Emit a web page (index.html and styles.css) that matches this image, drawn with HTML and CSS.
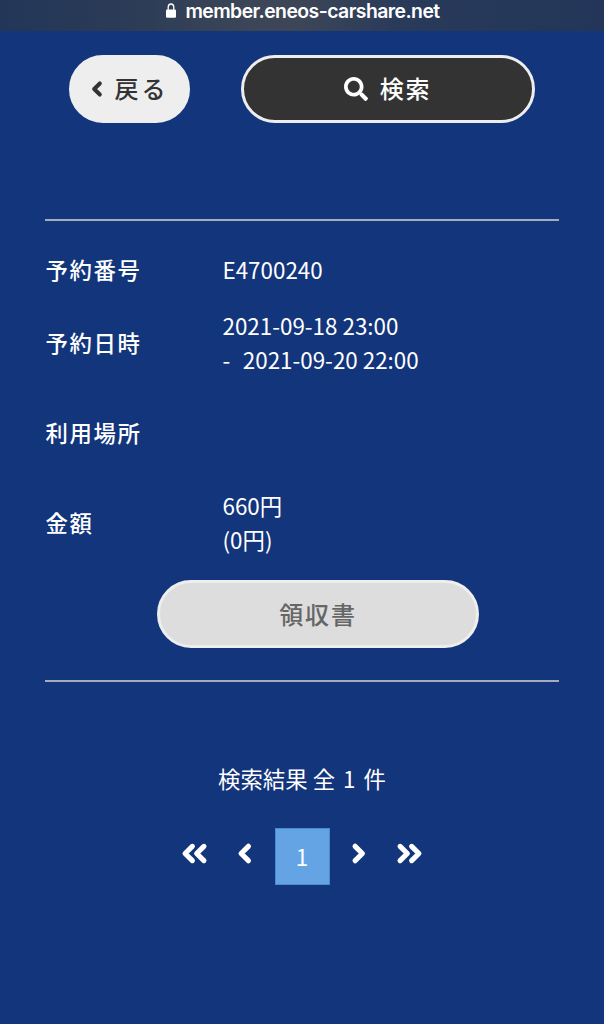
FILE: index.html
```html
<!DOCTYPE html>
<html lang="ja">
<head>
<meta charset="utf-8">
<title>member.eneos-carshare.net</title>
<link rel="stylesheet" href="styles.css">
</head>
<body>
<header class="browser-bar">
  <svg class="lock" viewBox="0 0 10 15"><path d="M2.2 7V4.2a2.8 3.2 0 0 1 5.6 0V7" fill="none" stroke="currentColor" stroke-width="1.3"/><rect x="0" y="6.4" width="10" height="8.4" rx="1.2" fill="currentColor"/></svg>
  <span class="url">member.eneos-carshare.net</span>
</header>
<main>
  <div class="actions">
    <button class="button button-back"><svg class="icon-back chevron" viewBox="0 0 256 512"><path d="M188 138L68 256l120 118"/></svg><span class="back-label">戻る</span></button>
    <button class="button button-search"><svg class="icon-search" viewBox="0 0 512 512"><path fill="currentColor" d="M505 442.7L405.3 343c-4.5-4.5-10.6-7-17-7H372c27.6-35.3 44-79.7 44-128C416 93.1 322.9 0 208 0S0 93.1 0 208s93.1 208 208 208c48.3 0 92.7-16.4 128-44v16.3c0 6.4 2.5 12.5 7 17l99.7 99.7c9.4 9.4 24.6 9.4 33.9 0l28.3-28.3c9.4-9.4 9.4-24.6.1-34zM208 336c-70.7 0-128-57.2-128-128 0-70.7 57.2-128 128-128 70.7 0 128 57.2 128 128 0 70.7-57.2 128-128 128z"/></svg><span>検索</span></button>
  </div>
  <section class="reservation">
    <dl class="details">
      <dt>予約番号</dt><dd>E4700240</dd>
      <dt>予約日時</dt><dd>2021-09-18 23:00<br>-<span class="end-date">2021-09-20 22:00</span></dd>
      <dt>利用場所</dt><dd></dd>
      <dt>金額</dt><dd>660円<br>(0円)</dd>
    </dl>
    <button class="button button-receipt" disabled>領収書</button>
  </section>
  <p class="result-count">検索結果 全<span class="count">1</span>件</p>
  <nav class="pagination">
    <svg class="double chevron" viewBox="0 0 448 512"><path d="M188 138L68 256l120 118M380 138L260 256l120 118"/></svg>
    <svg class="single previous chevron" viewBox="0 0 256 512"><path d="M188 138L68 256l120 118"/></svg>
    <span class="current">1</span>
    <svg class="single next chevron" viewBox="0 0 256 512"><path d="M68 138l120 118L68 374"/></svg>
    <svg class="double chevron" viewBox="0 0 448 512"><path d="M68 138l120 118L68 374M260 138l120 118-120 118"/></svg>
  </nav>
</main>
</body>
</html>
```
FILE: styles.css
```css
* { box-sizing: border-box; }
body {
  margin: 0;
  min-height: 1024px;
  background: #13357b;
  color: #fff;
  font: 22.4px/34px "Noto Sans CJK JP", sans-serif;
}
svg { display: block; flex: none; }
.chevron {
  fill: none;
  stroke: currentColor;
  stroke-width: 86px;
  stroke-linecap: round;
  stroke-linejoin: round;
}
.browser-bar {
  height: 31px;
  display: flex;
  justify-content: center;
  align-items: flex-start;
  gap: 9px;
  padding: 0 0 0 2px;
  background: linear-gradient(90deg, #233659 0%, #2c3c57 22%, #3c4657 42%, #3c4657 50%, #293a5a 66%, #233659 100%);
}
.lock { width: 10px; height: 15px; margin-top: 3px; }
.url { font: 600 19.4px/22px Inter, sans-serif; letter-spacing: -0.55px; }
.actions {
  display: flex;
  gap: 51px;
  padding: 23.5px 0 0 69px;
}
.button {
  display: flex;
  align-items: center;
  justify-content: center;
  height: 68px;
  padding: 0 0 1px;
  border: 3.5px solid #eee;
  border-radius: 34px;
  font: 500 24px/34px "Noto Sans CJK JP", sans-serif;
  letter-spacing: 1.8px;
}
.button-back { width: 121px; background: #eee; color: #333; gap: 12px; }
.back-label { letter-spacing: 3px; }
.icon-back { width: 12px; height: 24px; margin-top: 1px; }
.button-search { width: 294px; background: #333; color: #fff; gap: 12px; padding-right: 1px; }
.icon-search { width: 24px; height: 24px; margin-top: 1px; }
.reservation {
  margin: 96.5px 45px 0;
  height: 463px;
  border-top: 2px solid #a5acbd;
  border-bottom: 2px solid #a5acbd;
  padding-top: 19.5px;
}
.details {
  display: grid;
  grid-template-columns: 177px 1fr;
  grid-template-rows: 56px 90px 90.5px 90.5px;
  align-items: center;
  margin: 0;
  padding-left: 0.5px;
}
.details dt { font-weight: 500; letter-spacing: 1.6px; }
.details dd { margin: 0; }
.end-date { margin-left: 12.5px; }
.button-receipt {
  width: 322px;
  margin: 12.5px 0 0 112px;
  background: #ddd;
  color: #666;
}
.result-count { margin: 79px 0 0; text-align: center; }
.count { margin: 0 8px; }
.pagination {
  display: flex;
  justify-content: center;
  align-items: center;
  margin-top: 32.5px;
}
.double { width: 27px; height: 31px; margin-bottom: 5px; }
.single { width: 15.5px; height: 31px; margin-bottom: 5px; }
.previous { margin-left: 29.5px; margin-right: 21.7px; }
.next { margin-left: 21.7px; margin-right: 29.5px; }
.current {
  width: 55px;
  height: 57px;
  background: #64a4e5;
  border: 1px solid #4b8bd0;
  text-align: center;
  line-height: 55px;
}
```
